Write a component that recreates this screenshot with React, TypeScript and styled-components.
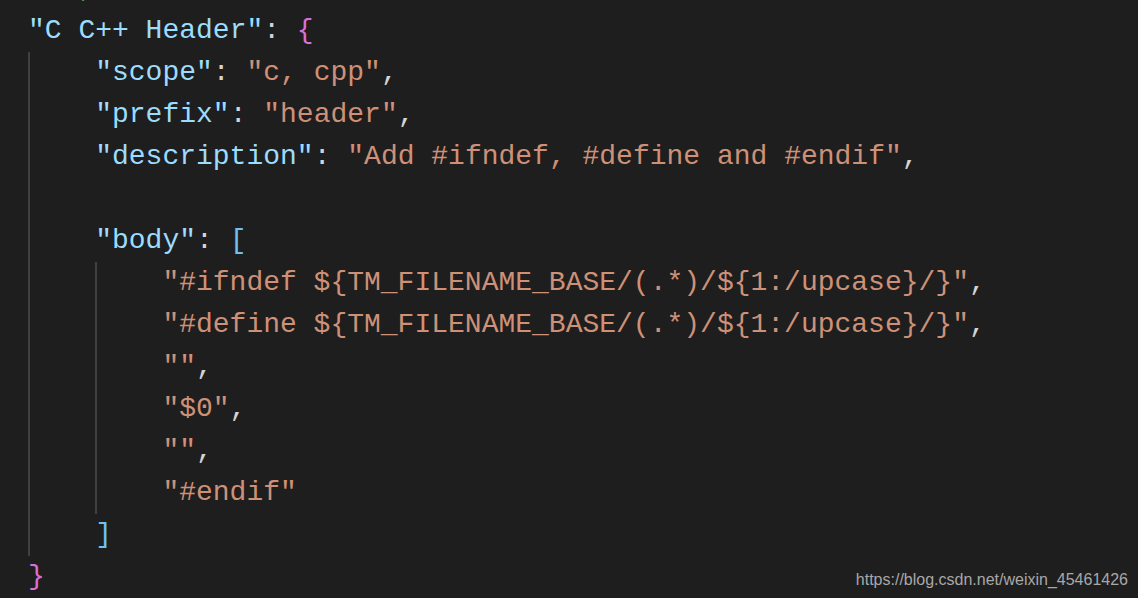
import React from "react";
import styled, { createGlobalStyle } from "styled-components";

const Global = createGlobalStyle`
  html, body { margin: 0; padding: 0; background: #1e1e1e; }
  body { overflow: hidden; }
`;

const Page = styled.div`
  position: relative;
  width: 1138px;
  height: 598px;
  background: #1e1e1e;
  overflow: hidden;
  display: flex;
  flex-direction: column;
`;

const Editor = styled.div`
  flex: 1;
  padding-left: 28px;
  margin-top: -32px;
  font-family: "Liberation Mono", "Courier New", monospace;
  font-size: 28px;
  line-height: 42px;
  color: #d4d4d4;
  white-space: pre;
`;

const BottomStrip = styled.div`
  height: 3px;
  background: #262626;
`;

const Line = styled.div`
  height: 42px;
`;

const Block = styled.div`
  border-left: 2px solid #404040;
  padding-left: 65.2px;
`;

const Key = styled.span`color: #9cdcfe;`;
const Str = styled.span`color: #ce9178;`;
const Punc = styled.span`color: #d4d4d4;`;
const Brace = styled.span<{ $c: string }>`color: ${(p) => p.$c};`;
const Comment = styled.span`color: #6a9955;`;

const Watermark = styled.div`
  position: absolute;
  right: 10px;
  bottom: 9px;
  font-family: "Liberation Sans", Arial, sans-serif;
  font-size: 16px;
  line-height: 18px;
  color: #a8a8a8;
`;

const Prop = ({ k, v, last }: { k: string; v: string; last?: boolean }) => (
  <Line>
    <Key>"{k}"</Key>
    <Punc>: </Punc>
    <Str>"{v}"</Str>
    {!last && <Punc>,</Punc>}
  </Line>
);

const Item = ({ v, last }: { v: string; last?: boolean }) => (
  <Line>
    <Str>"{v}"</Str>
    {!last && <Punc>,</Punc>}
  </Line>
);

export default function App() {
  return (
    <Page>
      <Global />
      <Editor>
        <Line>
          <Comment>   ,</Comment>
        </Line>
        <Line>
          <Key>"C C++ Header"</Key>
          <Punc>: </Punc>
          <Brace $c="#da70d6">{"{"}</Brace>
        </Line>
        <Block>
          <Prop k="scope" v="c, cpp" />
          <Prop k="prefix" v="header" />
          <Prop k="description" v="Add #ifndef, #define and #endif" />
          <Line />
          <Line>
            <Key>"body"</Key>
            <Punc>: </Punc>
            <Brace $c="#6fc0f7">[</Brace>
          </Line>
          <Block>
            <Item v="#ifndef ${TM_FILENAME_BASE/(.*)/${1:/upcase}/}" />
            <Item v="#define ${TM_FILENAME_BASE/(.*)/${1:/upcase}/}" />
            <Item v="" />
            <Item v="$0" />
            <Item v="" />
            <Item v="#endif" last />
          </Block>
          <Line>
            <Brace $c="#6fc0f7">]</Brace>
          </Line>
        </Block>
        <Line>
          <Brace $c="#da70d6">{"}"}</Brace>
        </Line>
      </Editor>
      <BottomStrip />
      <Watermark>https://blog.csdn.net/weixin_45461426</Watermark>
    </Page>
  );
}
